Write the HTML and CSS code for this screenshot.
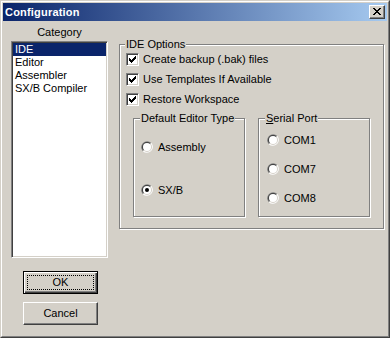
FILE: index.html
```html
<!DOCTYPE html>
<html>
<head>
<meta charset="utf-8">
<link rel="stylesheet" href="styles.css">
</head>
<body>
<svg class="defs" width="0" height="0">
  <defs>
    <symbol id="radio" viewBox="0 0 12 12">
      <path d="M1.76 10.24A6 6 0 0 1 10.24 1.76Z" fill="#808080"/>
      <path d="M10.24 1.76A6 6 0 0 1 1.76 10.24Z" fill="#ffffff"/>
      <path d="M2.46 9.54A5 5 0 0 1 9.54 2.46Z" fill="#404040"/>
      <path d="M9.54 2.46A5 5 0 0 1 2.46 9.54Z" fill="#d4d0c8"/>
      <circle cx="6" cy="6" r="4" fill="#ffffff"/>
    </symbol>
    <symbol id="check" viewBox="0 0 7 7">
      <path d="M6 0h1v1h-1zM5 1h2v1h-2zM0 2h1v1h-1zM4 2h3v1h-3zM0 3h2v1h-2zM3 3h3v1h-3zM0 4h5v1h-5zM1 5h3v1h-3zM2 6h1v1h-1z" fill="#000"/>
    </symbol>
  </defs>
</svg>
<div class="window">
  <div class="frame">
    <div class="titlebar">
      <span class="title">Configuration</span>
      <span class="close">
        <svg width="8" height="7" viewBox="0 0 8 7" shape-rendering="crispEdges"><path d="M0 0h2v1h-2zM6 0h2v1h-2zM1 1h2v1h-2zM5 1h2v1h-2zM2 2h4v1h-4zM3 3h2v1h-2zM2 4h4v1h-4zM1 5h2v1h-2zM5 5h2v1h-2zM0 6h2v1h-2zM6 6h2v1h-2z" fill="#000"/></svg>
      </span>
    </div>
    <div class="body">
      <div class="left">
        <div class="cat-label">Category</div>
        <ul class="list">
          <li class="sel">IDE</li>
          <li>Editor</li>
          <li>Assembler</li>
          <li>SX/B Compiler</li>
        </ul>
        <div class="buttons">
          <button class="btn default"><span class="focus">OK</span></button>
          <button class="btn"><span class="plain">Cancel</span></button>
        </div>
      </div>
      <div class="right">
        <fieldset class="group main">
          <legend>IDE Options</legend>
          <div class="checks">
            <div class="row"><span class="cb"><svg width="7" height="7" shape-rendering="crispEdges"><use href="#check"/></svg></span>Create backup (.bak) files</div>
            <div class="row"><span class="cb"><svg width="7" height="7" shape-rendering="crispEdges"><use href="#check"/></svg></span>Use Templates If Available</div>
            <div class="row"><span class="cb"><svg width="7" height="7" shape-rendering="crispEdges"><use href="#check"/></svg></span>Restore Workspace</div>
          </div>
          <div class="subgroups">
            <fieldset class="group sub editor">
              <legend>Default Editor Type</legend>
              <div class="row radio-row first"><svg class="rb" width="12" height="12"><use href="#radio"/></svg>Assembly</div>
              <div class="row radio-row second"><svg class="rb" width="12" height="12"><use href="#radio"/><circle cx="6" cy="6" r="2" fill="#000"/></svg>SX/B</div>
            </fieldset>
            <fieldset class="group sub port">
              <legend><u>S</u>erial Port</legend>
              <div class="row radio-row p1"><svg class="rb" width="12" height="12"><use href="#radio"/></svg>COM1</div>
              <div class="row radio-row p2"><svg class="rb" width="12" height="12"><use href="#radio"/></svg>COM7</div>
              <div class="row radio-row p2"><svg class="rb" width="12" height="12"><use href="#radio"/></svg>COM8</div>
            </fieldset>
          </div>
        </fieldset>
      </div>
    </div>
  </div>
</div>
</body>
</html>
```

FILE: styles.css
```css
html, body {
  margin: 0;
  padding: 0;
  background: #d4d0c8;
}

body {
  font-family: "Liberation Sans", Arial, sans-serif;
  font-size: 11px;
  line-height: 13px;
  color: #000;
}

.defs {
  position: absolute;
  width: 0;
  height: 0;
  overflow: hidden;
}

.window {
  width: 390px;
  height: 338px;
  box-sizing: border-box;
  border: 1px solid;
  border-color: #d4d0c8 #404040 #404040 #d4d0c8;
  background: #d4d0c8;
}

.frame {
  height: 100%;
  box-sizing: border-box;
  border: 1px solid;
  border-color: #ffffff #808080 #808080 #ffffff;
  padding: 1px;
  display: flex;
  flex-direction: column;
}

.titlebar {
  height: 18px;
  flex: none;
  background: linear-gradient(to right, #0a246a, #a6caf0);
  display: flex;
  align-items: center;
  justify-content: space-between;
  padding: 0 2px;
}

.title {
  color: #fff;
  font-weight: bold;
  font-size: 11px;
  letter-spacing: 0.2px;
  line-height: 13px;
}

.close {
  width: 16px;
  height: 14px;
  box-sizing: border-box;
  background: #d4d0c8;
  border: 1px solid;
  border-color: #ffffff #404040 #404040 #ffffff;
  box-shadow: inset -1px -1px 0 #808080;
  display: flex;
  align-items: center;
  justify-content: center;
  padding: 0 1px 1px 0;
}

.close svg {
  display: block;
}

.body {
  flex: 1;
  display: flex;
  padding: 5px 0 0 8px;
  gap: 11px;
}

.left {
  width: 97px;
  display: flex;
  flex-direction: column;
}

.cat-label {
  text-align: center;
  height: 13px;
  margin-bottom: 2px;
}

.list {
  list-style: none;
  margin: 0;
  height: 217px;
  box-sizing: border-box;
  background: #fff;
  border: 1px solid;
  border-color: #808080 #ffffff #ffffff #808080;
  box-shadow: inset 1px 1px 0 #404040, inset -1px -1px 0 #d4d0c8;
  padding: 1px;
}

.list li {
  height: 13px;
  padding-left: 2px;
}

.list li.sel {
  background: #0a246a;
  color: #fff;
}

.buttons {
  margin-top: 13px;
  margin-left: 12px;
  display: flex;
  flex-direction: column;
  gap: 8px;
}

.btn {
  width: 75px;
  height: 23px;
  box-sizing: border-box;
  font: inherit;
  color: #000;
  background: #d4d0c8;
  border: 1px solid;
  border-color: #ffffff #404040 #404040 #ffffff;
  box-shadow: inset -1px -1px 0 #808080;
  padding: 0;
  display: flex;
  align-items: stretch;
}

.btn.default {
  border: 1px solid #000;
  box-shadow: inset 1px 1px 0 #ffffff, inset -1px -1px 0 #404040, inset -2px -2px 0 #808080;
  padding: 3px;
}

.btn .focus,
.btn .plain {
  flex: 1;
  display: flex;
  align-items: center;
  justify-content: center;
  box-sizing: border-box;
}

.btn .focus {
  border: 1px dotted #000;
}

.btn .plain {
  padding-bottom: 1px;
}

.right {
  margin-top: 12px;
  width: 265px;
}

.group {
  margin: 0;
  padding: 0;
  min-width: 0;
  border: 1px solid #808080;
  box-shadow: inset 1px 1px 0 #ffffff, 1px 1px 0 #ffffff;
}

.group legend {
  padding: 0 1px;
  margin-left: 5px;
  line-height: 13px;
  background: #d4d0c8;
}

.group.main {
  height: 191px;
  box-sizing: border-box;
}

.checks {
  padding-left: 6px;
  display: flex;
  flex-direction: column;
  gap: 4px;
}

.row {
  height: 16px;
  display: flex;
  align-items: center;
}

.cb {
  width: 13px;
  height: 13px;
  box-sizing: border-box;
  background: #fff;
  border: 1px solid;
  border-color: #808080 #ffffff #ffffff #808080;
  box-shadow: inset 1px 1px 0 #404040, inset -1px -1px 0 #d4d0c8;
  display: flex;
  align-items: center;
  justify-content: center;
  margin-right: 4px;
  flex: none;
}

.cb svg {
  display: block;
}

.subgroups {
  display: flex;
  gap: 13px;
  padding: 5px 13px 0 13px;
}

.group.sub {
  flex: 1;
  height: 105px;
  box-sizing: border-box;
}

.group.sub legend {
  margin-left: 6px;
}

.radio-row {
  padding-left: 7px;
}

.rb {
  flex: none;
  margin-right: 5px;
}

.editor .first {
  margin-top: 14px;
}

.editor .second {
  margin-top: 27px;
}

.port .radio-row {
  padding-left: 8px;
}

.port .p1 {
  margin-top: 7px;
}

.port .p2 {
  margin-top: 13px;
}
```
